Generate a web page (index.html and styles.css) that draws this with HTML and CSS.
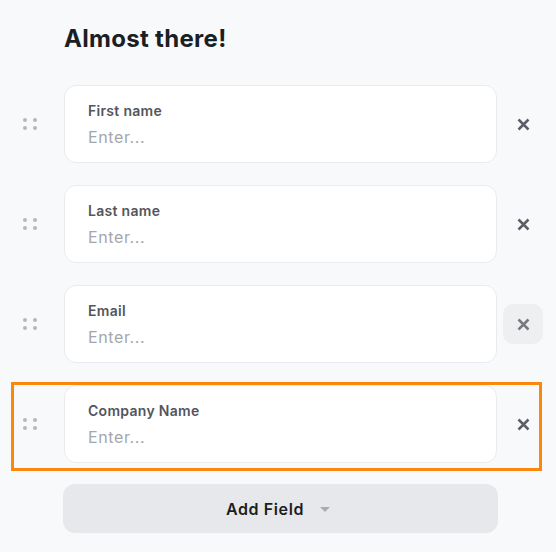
FILE: index.html
```html
<!DOCTYPE html>
<html lang="en">
<head>
<meta charset="utf-8">
<title>Almost there!</title>
<link rel="stylesheet" href="styles.css">
</head>
<body>
<main class="page">
  <h1 class="title">Almost there!</h1>
  <ul class="fields">
    <li class="field-row">
      <span class="handle"><span class="dots"><i></i><i></i><i></i><i></i></span></span>
      <div class="card">
        <div class="label">First name</div>
        <div class="placeholder">Enter...</div>
      </div>
      <button class="remove" aria-label="Remove field">
        <svg width="13" height="13" viewBox="0 0 13 13"><path d="M1.5 1.5 L11.5 11.5 M11.5 1.5 L1.5 11.5" /></svg>
      </button>
    </li>
    <li class="field-row">
      <span class="handle"><span class="dots"><i></i><i></i><i></i><i></i></span></span>
      <div class="card">
        <div class="label">Last name</div>
        <div class="placeholder">Enter...</div>
      </div>
      <button class="remove" aria-label="Remove field">
        <svg width="13" height="13" viewBox="0 0 13 13"><path d="M1.5 1.5 L11.5 11.5 M11.5 1.5 L1.5 11.5" /></svg>
      </button>
    </li>
    <li class="field-row">
      <span class="handle"><span class="dots"><i></i><i></i><i></i><i></i></span></span>
      <div class="card">
        <div class="label">Email</div>
        <div class="placeholder">Enter...</div>
      </div>
      <button class="remove is-hover" aria-label="Remove field">
        <svg width="13" height="13" viewBox="0 0 13 13"><path d="M1.5 1.5 L11.5 11.5 M11.5 1.5 L1.5 11.5" /></svg>
      </button>
    </li>
    <li class="field-row is-selected">
      <span class="handle"><span class="dots"><i></i><i></i><i></i><i></i></span></span>
      <div class="card">
        <div class="label">Company Name</div>
        <div class="placeholder">Enter...</div>
      </div>
      <button class="remove" aria-label="Remove field">
        <svg width="13" height="13" viewBox="0 0 13 13"><path d="M1.5 1.5 L11.5 11.5 M11.5 1.5 L1.5 11.5" /></svg>
      </button>
    </li>
  </ul>
  <button class="add-field">Add Field <span class="caret"></span></button>
</main>
</body>
</html>
```
FILE: styles.css
```css
* { box-sizing: border-box; }
html, body {
  margin: 0;
  background: #f8f9fb;
}
body {
  font-family: Inter, "Noto Sans", "Liberation Sans", sans-serif;
  color: #1b1e23;
}
.page {
  padding: 0 0 0 11px;
  width: 556px;
}
.title {
  margin: 23px 0 0 53px;
  font-size: 24px;
  line-height: 32px;
  font-weight: 700;
  color: #1b1e23;
  letter-spacing: 0.3px;
}
.fields {
  list-style: none;
  margin: 27px 0 0 0;
  padding: 0;
  display: flex;
  flex-direction: column;
  gap: 11px;
}
.field-row {
  display: flex;
  align-items: flex-start;
  width: 531px;
  border: 3px solid transparent;
  padding-bottom: 5px;
}
.field-row.is-selected {
  border-color: #fb870c;
}
.handle {
  flex: 0 0 50px;
  height: 78px;
  display: flex;
  align-items: center;
  padding-left: 9px;
}
.dots {
  display: grid;
  grid-template-columns: 4px 4px;
  grid-template-rows: 4px 4px;
  column-gap: 6px;
  row-gap: 4px;
}
.dots i {
  display: block;
  width: 4px;
  height: 4px;
  border-radius: 50%;
  background: #b5b7bb;
}
.card {
  flex: 0 0 433px;
  height: 78px;
  background: #ffffff;
  border: 1px solid #eaebee;
  border-radius: 12px;
  padding: 15px 24px 13px 23px;
}
.label {
  font-size: 14px;
  line-height: 20px;
  font-weight: 600;
  color: #53565c;
  letter-spacing: 0.3px;
}
.placeholder {
  margin-top: 4px;
  font-size: 16px;
  line-height: 24px;
  color: #a3a6ab;
  letter-spacing: 0.6px;
}
.remove {
  flex: 0 0 40px;
  width: 40px;
  height: 40px;
  margin: 19px -4px 0 6px;
  border: none;
  border-radius: 10px;
  background: transparent;
  display: flex;
  align-items: center;
  justify-content: center;
  padding: 0;
}
.remove svg path {
  stroke: #5b5e64;
  stroke-width: 2.5;
  fill: none;
}
.remove.is-hover {
  background: #eeeff1;
}
.remove.is-hover svg path {
  stroke: #76797e;
}
.add-field {
  display: flex;
  align-items: center;
  justify-content: center;
  margin: 13px 0 0 52px;
  width: 435px;
  height: 49px;
  border: none;
  border-radius: 12px;
  background: #e7e8eb;
  font-family: Inter, "Noto Sans", "Liberation Sans", sans-serif;
  font-size: 16px;
  font-weight: 600;
  color: #1b1e23;
  letter-spacing: 0.6px;
  padding: 0 5px 0 0;
}
.caret {
  display: inline-block;
  width: 0;
  height: 0;
  margin-left: 16px;
  margin-top: 1px;
  border-left: 5px solid transparent;
  border-right: 5px solid transparent;
  border-top: 5px solid #a9abaf;
}
```
